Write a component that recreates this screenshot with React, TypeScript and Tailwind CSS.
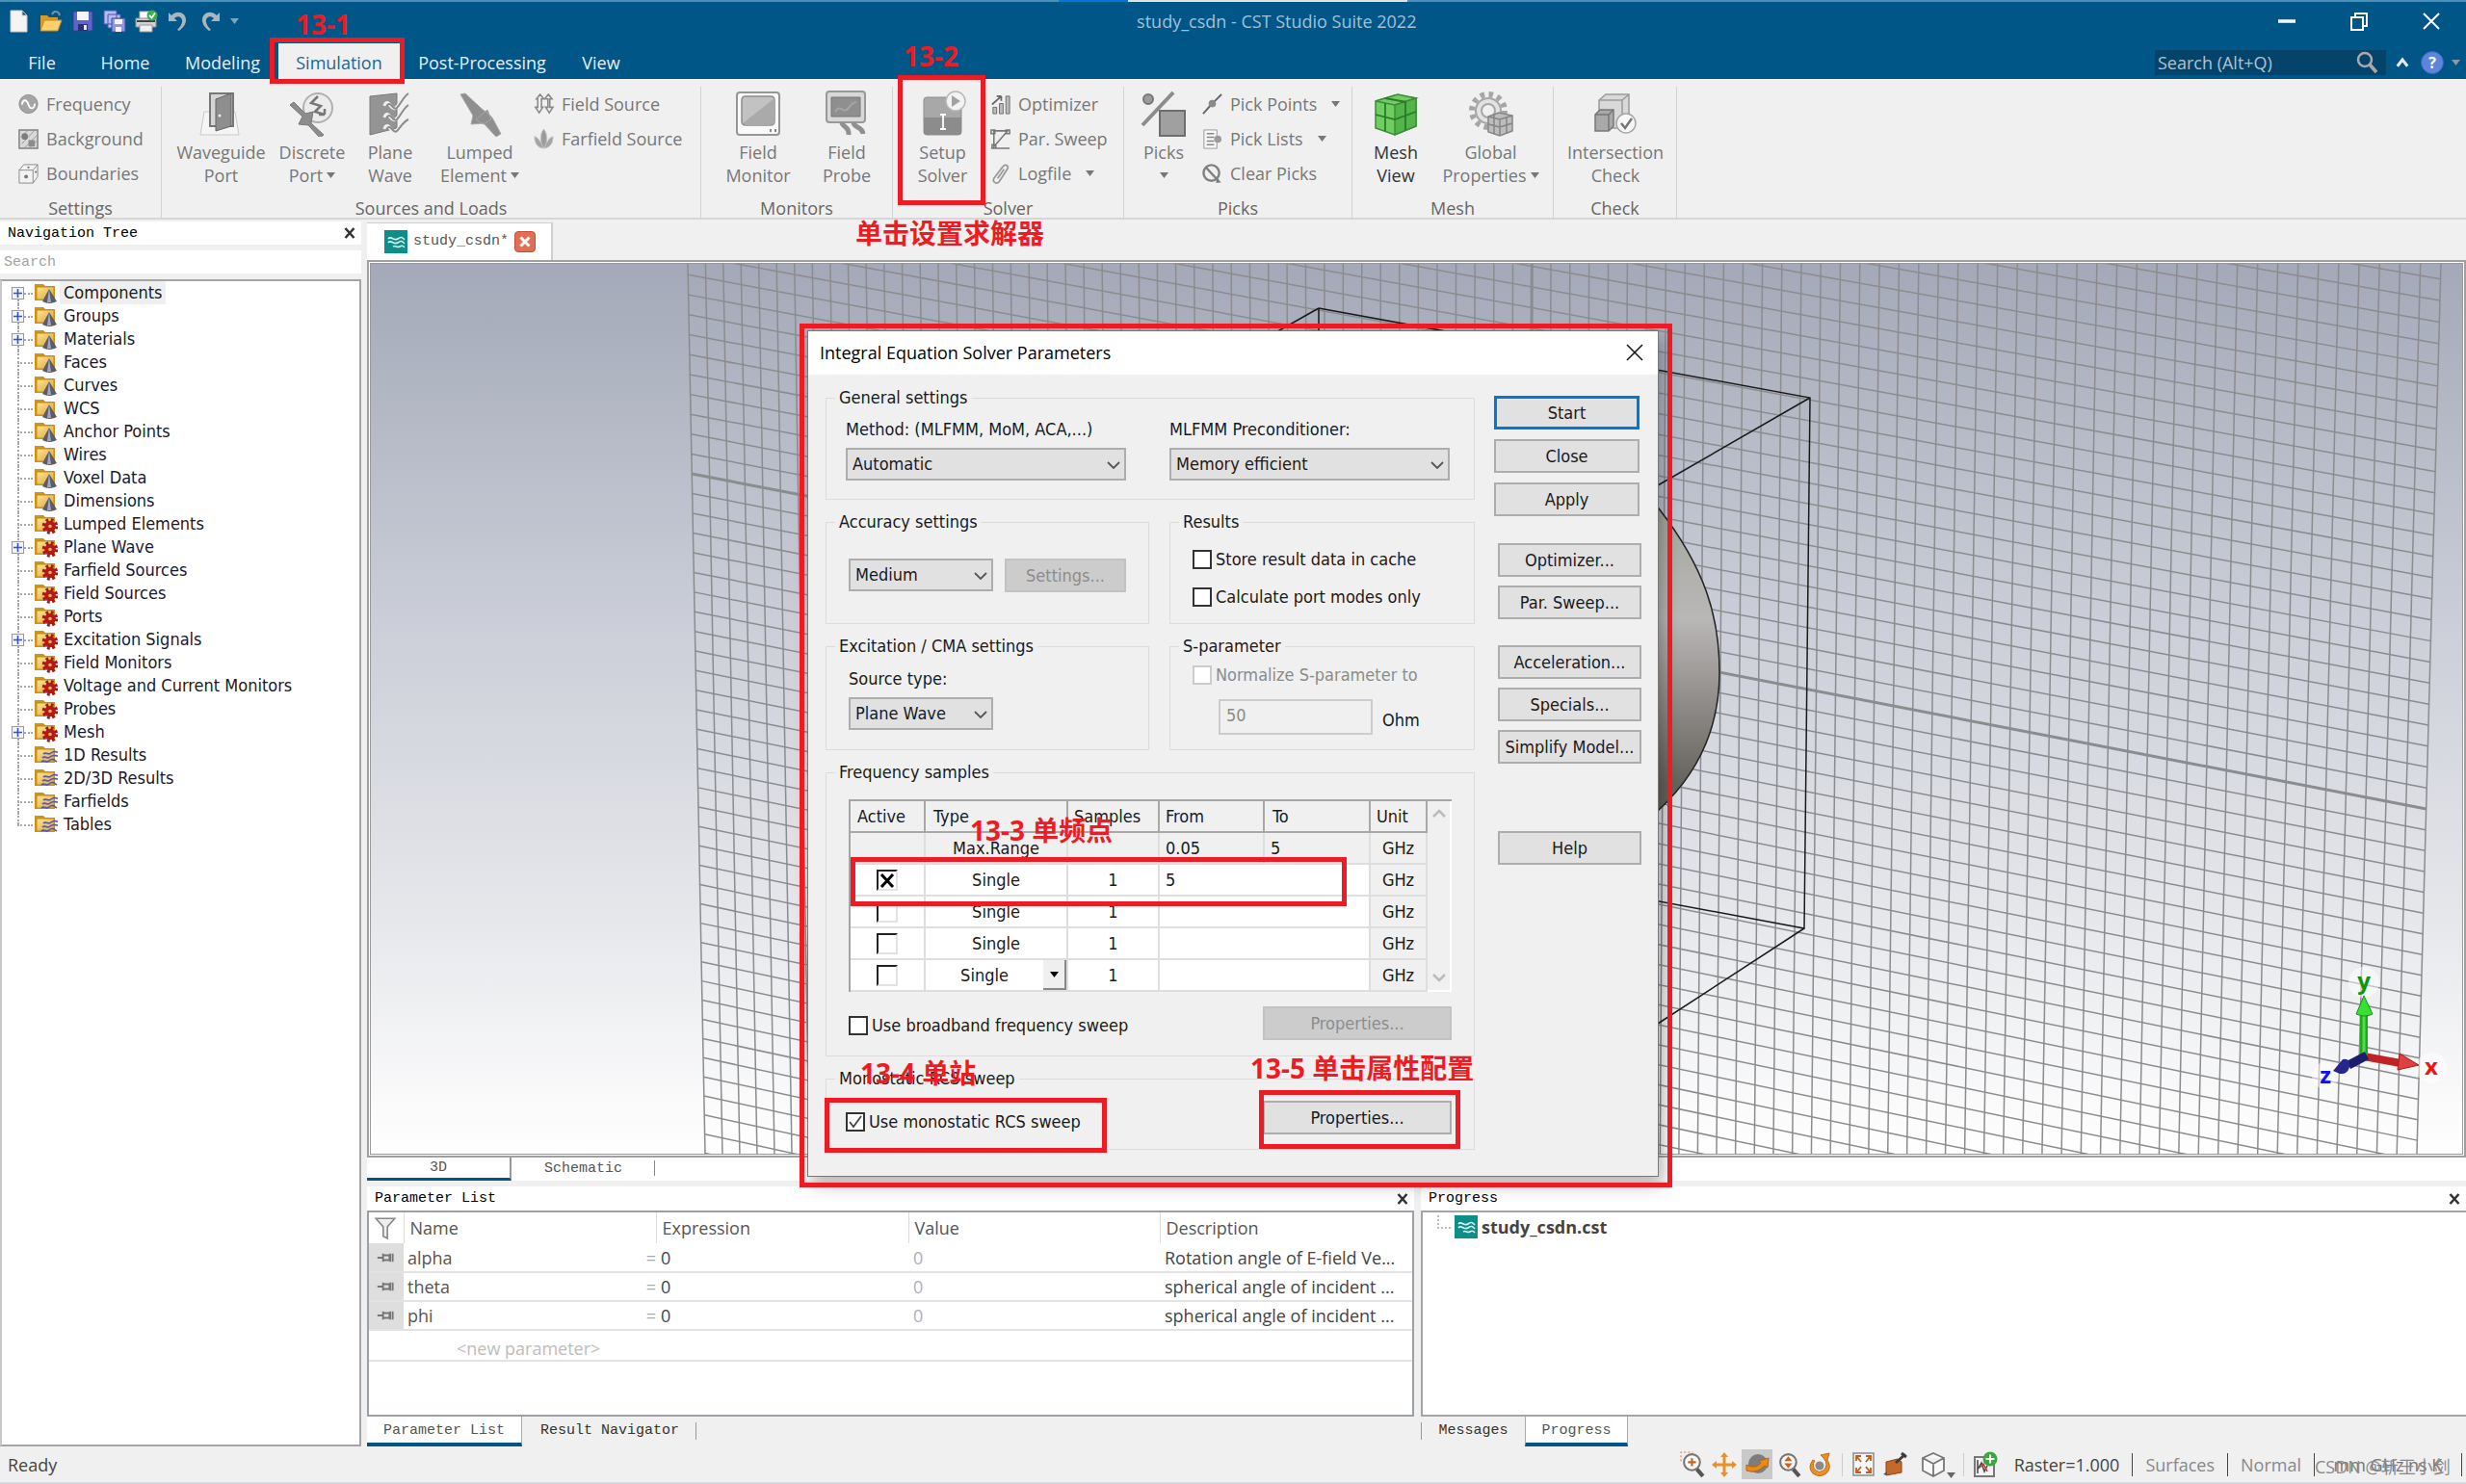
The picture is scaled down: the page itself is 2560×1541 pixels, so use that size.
import type { ReactNode } from "react"

const SEGOE = "font-['Open_Sans',sans-serif]"
const TAHOMA = "font-['DejaVu_Sans_Condensed','Noto_Sans',sans-serif]"
const MONO = "font-['Liberation_Mono',monospace]"
const NOTE = "font-['Open_Sans','Noto_Sans_CJK_SC',sans-serif]"

/* ---------- icons ---------- */

function Ico({ className = "size-6", box = 24, children }: { className?: string; box?: number; children: ReactNode }) {
  return (
    <svg className={`shrink-0 ${className}`} viewBox={`0 0 ${box} ${box}`} fill="none" aria-hidden="true">
      {children}
    </svg>
  )
}

function Caret({ className = "text-[#666]" }: { className?: string }) {
  return (
    <svg className={`inline-block h-[6px] w-[9px] ${className}`} viewBox="0 0 9 6" aria-hidden="true">
      <path d="M0 0h9L4.500 6z" fill="currentColor" />
    </svg>
  )
}

function CstIcon() {
  return (
    <Ico>
      <path d="M0 0h24v24H0z" fill="#0b8f88" />
      <path d="M4 9c3-4 6 3 10 0s5-1 7 1M4 13c3-4 6 3 10 0s5-1 7 1M9 17c3-2 4 2 7 0s4 0 5 1" stroke="#d8f3f1" strokeWidth="1.600" />
    </Ico>
  )
}

function CloseX({ label }: { label: string }) {
  return (
    <button aria-label={label} className="flex size-6 items-center justify-center">
      <Ico className="size-3" box={12}>
        <path d="M1.500 1l9 10M10.500 1l-9 10" stroke="#333" strokeWidth="2.600" />
      </Ico>
    </button>
  )
}

const quickIcons: { label: string; art: ReactNode }[] = [
  { label: "New", art: <path d="M3 1h12l5 5v17H3zM15 1v5h5" fill="#f4f4f4" stroke="#c9c9c9" /> },
  {
    label: "Open",
    art: (
      <>
        <path d="M1 6h7l2 2h9v13H1z" fill="#d99a2b" />
        <path d="M1 22l4-11h18l-4 11z" fill="#fcd06a" stroke="#c98a1d" />
        <path d="M13 5c2-4 7-4 8 1" stroke="#7f93a3" strokeWidth="2" />
      </>
    ),
  },
  {
    label: "Save",
    art: (
      <>
        <path d="M2 2h20v20H2z" fill="#5f66c9" stroke="#3a3f96" />
        <path d="M6 2h12v9H6z" fill="#f3f4ff" />
        <path d="M7 15h10v7H7z" fill="#2d3164" />
        <path d="M13 16h3v5h-3z" fill="#e5e6f5" />
      </>
    ),
  },
  {
    label: "Save All",
    art: (
      <>
        <path d="M1 1h13v14H1zM5 5h13v14H5z" fill="#b5bdf0" stroke="#4a56b5" />
        <path d="M9 9h14v14H9z" fill="#8d98e0" stroke="#3f4aa5" />
        <path d="M12 10h8v5h-8zM13 18h6v5h-6z" fill="#f3f4ff" />
      </>
    ),
  },
  {
    label: "Print",
    art: (
      <>
        <path d="M5 2h12v9H5z" fill="#fff" stroke="#b8b8b8" />
        <path d="M1 9h21v9H1z" fill="#d2d2d0" stroke="#8f8f8f" />
        <path d="M2 12h19" stroke="#444" strokeWidth="2" />
        <path d="M5 16h13v7H5z" fill="#f0f0f0" stroke="#999" />
        <circle cx="18" cy="6" r="5.500" fill="#35b04a" />
        <path d="M15 6l2.500 2.500L21 3.500" stroke="#fff" strokeWidth="1.800" />
      </>
    ),
  },
  { label: "Undo", art: <path d="M2 3v9h9L8 9c4-4 9-1 8 4-.5 3-3 6-5 8l2 1c4-3 7-7 7-11C20 3 11 0 5 6z" fill="#a9b6bf" /> },
  { label: "Redo", art: <path d="M22 3v9h-9l3-3c-4-4-9-1-8 4 .5 3 3 6 5 8l-2 1c-4-3-7-7-7-11C4 3 13 0 19 6z" fill="#a9b6bf" /> },
]

const small = {
  frequency: (
    <>
      <circle cx="12" cy="11.500" r="10" fill="#a5a5a5" stroke="#8b8b8b" />
      <path d="M5 12c1-6 5-6 7 0s6 5 7-1" stroke="#fff" strokeWidth="2" />
    </>
  ),
  background: (
    <>
      <path d="M2 2h20v20H2z" fill="#d9d9d9" stroke="#808080" strokeWidth="1.500" />
      <path d="M4 10l7-7M5 17L18 3M8 21L21 8M14 21l7-7" stroke="#9a9a9a" />
      <circle cx="8" cy="9" r="3.500" fill="#7d7d7d" />
      <path d="M12 13h7v7h-7z" fill="#8d8d8d" />
    </>
  ),
  boundaries: (
    <>
      <path d="M2 8l5-6h15v13l-5 7H2z" fill="#f2f2f2" stroke="#8a8a8a" />
      <path d="M2 8h15v14M17 8l5-6" stroke="#8a8a8a" />
      <circle cx="9.500" cy="15" r="2" fill="#777" />
      <circle cx="12" cy="5" r="1.200" fill="#777" />
      <circle cx="20" cy="10" r="1.200" fill="#777" />
    </>
  ),
  fieldSource: (
    <path
      d="M8 1l4 5H9.500v9H11l-4 6-4-6h2.500V6H4zM17 1l4 5h-2.500v9H22l-4 6-4-6h2.500V6H13z"
      fill="#f0f0f0"
      stroke="#888"
      strokeWidth="1.600"
    />
  ),
  farfield: (
    <>
      <path d="M12 22C4 21 2 15 2 9c3 1 5 3 6 6 1-3 2-3 4-3s3 0 4 3c1-3 3-5 6-6 0 6-2 12-10 13z" fill="#a4a4a4" stroke="#c4c4c4" />
      <path d="M12 22C7 14 8 6 12 1c4 5 5 13 0 21z" fill="#9c9c9c" stroke="#c8c8c8" />
    </>
  ),
  optimizer: (
    <>
      <path d="M4 15h4v7H4zM11 11h4v11h-4zM18 3h4v19h-4z" fill="#bbb" stroke="#6d6d6d" />
      <path d="M3 12L13 3M13 3H8M13 3v5" stroke="#666" strokeWidth="1.800" />
    </>
  ),
  sweep: <path d="M4 3h16L5 20V4M2 22h20M2 2h4v4H2zM18 2h4v4h-4zM3 18h4v4H3z" stroke="#777" strokeWidth="1.600" />,
  logfile: <path d="M7 14l8-10c2-3 6-1 5 2l-9 14c-3 4-8 1-6-3l9-12M9 17l7-10" stroke="#999" strokeWidth="1.800" />,
  pickPoints: (
    <>
      <path d="M2 22l9-10 3-3 8-8" stroke="#666" strokeWidth="2" />
      <circle cx="12" cy="11" r="4" fill="#8a8a8a" />
    </>
  ),
  pickLists: (
    <>
      <path d="M3 2h14v20H3z" fill="#f7f7f7" stroke="#999" />
      <path d="M6 6h8M6 10h8M6 14h8M6 18h8" stroke="#888" strokeWidth="1.500" />
      <circle cx="18" cy="12" r="4" fill="#9b9b9b" />
    </>
  ),
  clearPicks: (
    <>
      <circle cx="11" cy="11" r="8.500" stroke="#808080" strokeWidth="2.500" />
      <path d="M5 5l14 15" stroke="#808080" strokeWidth="2.500" />
      <path d="M17 18l5 3-6 1z" fill="#777" />
    </>
  ),
}

const big = {
  waveguide: (
    <>
      <path d="M6 22h8v14h18V22h6l4 24H2z" fill="#f5f5f5" stroke="#c9c9c9" />
      <path d="M12 3h24v34H12z" fill="#d5d5d5" stroke="#777" strokeWidth="2" />
      <path d="M18 9L34 3v34l-16 5z" fill="#8e8e8e" stroke="#666" />
      <circle cx="22" cy="26" r="1.500" fill="#eee" />
    </>
  ),
  discrete: (
    <>
      <circle cx="30" cy="18" r="15" fill="#ececec" stroke="#b0b0b0" strokeWidth="2" />
      <path d="M30 6l-7 7 10 3-6 6 10 3M37 25h-6M37 25v-6" stroke="#777" strokeWidth="2.500" />
      <path d="M1 15l4-3 12 12 8-2-2 12 13 12-4 3-12-13-10-1 4-8z" fill="#8d8d8d" stroke="#777" />
    </>
  ),
  planeWave: (
    <>
      <path d="M3 6l28-3v36L3 46z" fill="#949494" stroke="#7b7b7b" />
      <path d="M18 16c4-10 7 6 12 2s8-12 13-14M18 28c4-10 7 6 12 2s8-12 13-14M18 40c4-10 7 6 12 2s8-10 13-12" stroke="#efefef" strokeWidth="3.500" />
      <path d="M20 17c4-9 7 5 11 1s7-12 12-15M20 29c4-9 7 5 11 1s7-12 12-15M20 41c4-9 7 5 11 1s7-10 12-12" stroke="#8b8b8b" strokeWidth="2" />
    </>
  ),
  lumped: <path d="M4 4l5-1 16 15 11 9 2 3 8 15-5 3-13-14-13 1 2-9z M20 30l12-10 4 10-8 5z" fill="#8f8f8f" stroke="#a7a7a7" />,
  monitor: (
    <>
      <path d="M2 5a3 3 0 013-3h38a3 3 0 013 3v38a3 3 0 01-3 3H5a3 3 0 01-3-3z" fill="#fafafa" stroke="#969696" strokeWidth="2" />
      <path d="M7 10q0-4 4-4h26q4 0 4 4v22q0 4-4 4H11q-4 0-4-4z" fill="#c2c2c2" stroke="#8c8c8c" strokeWidth="1.500" />
      <path d="M8 34L41 8v24q0 4-4 4H11z" fill="#aaa" />
      <path d="M36 40h2v3h-2zM41 40h2v3h-2z" fill="#888" />
    </>
  ),
  probe: (
    <>
      <path d="M6 1h34a3 3 0 013 3v26a3 3 0 01-3 3H6a3 3 0 01-3-3V4a3 3 0 013-3z" fill="#d8d8d8" stroke="#999" strokeWidth="2" />
      <path d="M8 7h30v20H8z" fill="#8f8f8f" stroke="#777" />
      <path d="M12 22c6-9 8 3 13-3s5-6 9-7" stroke="#a5a5a5" strokeWidth="2" />
      <path d="M19 33c0 5 8 4 7 13M31 33c0 6 9 4 10 12" stroke="#909090" strokeWidth="5" />
    </>
  ),
  solver: (
    <>
      <path d="M4 10a3 3 0 013-3h33a3 3 0 013 3v33a3 3 0 01-3 3H7a3 3 0 01-3-3z" fill="#a8a8a8" stroke="#8e8e8e" />
      <path d="M4 28h39v15a3 3 0 01-3 3H7a3 3 0 01-3-3z" fill="#8c8c8c" />
      <path d="M21 25h6M24 25v15M21 40h6" stroke="#fff" strokeWidth="1.800" />
      <circle cx="37" cy="11" r="10" fill="#f3f3f3" stroke="#b9b9b9" strokeWidth="1.500" />
      <path d="M33 5l9 6-9 6z" fill="#a2a2a2" />
    </>
  ),
  picks: (
    <>
      <circle cx="8" cy="9" r="5" fill="#9b9b9b" stroke="#777" strokeWidth="2" />
      <path d="M2 36L34 2" stroke="#8c8c8c" strokeWidth="4" />
      <path d="M20 21h26v26H20z" fill="#a0a0a0" stroke="#6e6e6e" strokeWidth="2" />
    </>
  ),
  mesh: (
    <>
      <path d="M3 11l20-6 22 3v29l-22 9-20-7z" fill="#6fce62" stroke="#3a8f36" strokeWidth="1.500" />
      <path d="M3 11l20 4 22-7L26 4z" fill="#74c968" stroke="#3a8f36" strokeWidth="1.500" />
      <path d="M23 15l22-7v29l-22 9z" fill="#52b54a" stroke="#3a8f36" strokeWidth="1.500" />
      <path d="M13 13v29M3 25l20 5 22-8M34 11v30M13 8l22 4" stroke="#2a7a28" strokeWidth="1.800" />
    </>
  ),
  global: (
    <>
      <circle cx="21" cy="21" r="17" stroke="#a6a6a6" strokeWidth="6" strokeDasharray="4.500 4.400" />
      <circle cx="21" cy="21" r="13" fill="#e2e2e2" stroke="#a6a6a6" strokeWidth="2" />
      <circle cx="21" cy="21" r="7" fill="#f0f0f0" stroke="#a6a6a6" strokeWidth="2" />
      <path d="M21 27l11-4 14 3v16l-13 5-12-4z" fill="#bdbdbd" stroke="#858585" strokeWidth="1.500" />
      <path d="M21 27l12 3 13-4M33 30v17M21 35l12 3 13-4M27 25v20M40 28v17" stroke="#858585" strokeWidth="1.500" />
    </>
  ),
  intersection: (
    <>
      <path d="M7 10l7-6h24v28l-7 7H7z" fill="#d9d9d9" stroke="#9a9a9a" strokeWidth="1.500" />
      <path d="M7 10h24v28M31 10l7-6" stroke="#9a9a9a" strokeWidth="1.500" />
      <path d="M3 25l5-5h14v17l-5 5H3z" fill="#a9a9a9" stroke="#777" strokeWidth="1.500" />
      <path d="M3 25h14v17M17 25l5-5" stroke="#777" strokeWidth="1.500" />
      <circle cx="35" cy="34" r="10" fill="#f8f8f8" stroke="#a6a6a6" strokeWidth="1.500" />
      <path d="M30 34l4 5 7-10" stroke="#777" strokeWidth="2.500" />
    </>
  ),
}

/* ---------- ribbon ---------- */

function SmallBtn({ icon, text, caret }: { icon: ReactNode; text: string; caret?: boolean }) {
  return (
    <button className="flex h-9 items-center gap-[7px] whitespace-nowrap text-left">
      <Ico className="size-[23px]">{icon}</Ico>
      <span>{text}</span>
      {caret && <Caret className="ml-2 text-[#777]" />}
    </button>
  )
}

function BigBtn({
  icon,
  top,
  bottom,
  width,
  caret,
  dark,
}: {
  icon: ReactNode
  top: string
  bottom?: string
  width: string
  caret?: boolean
  dark?: boolean
}) {
  return (
    <button className={`flex flex-col items-center pt-1 ${width} ${dark ? "text-[#333]" : ""}`}>
      <Ico className="size-12" box={48}>
        {icon}
      </Ico>
      <span className="mt-1 flex flex-col items-center whitespace-nowrap leading-6">
        <span>{top}</span>
        <span className="flex h-6 items-center gap-1">
          {bottom}
          {caret && <Caret className="text-[#777]" />}
        </span>
      </span>
    </button>
  )
}

function RibbonGroup({ name, width, pad = "pl-2", children }: { name: string; width: string; pad?: string; children: ReactNode }) {
  return (
    <section className={`flex shrink-0 flex-col border-r border-[#d2d2d2] ${width}`}>
      <div className={`flex h-[117px] items-start ${pad}`}>{children}</div>
      <h2 className="text-center leading-5 text-[#666]">{name}</h2>
    </section>
  )
}

function Ribbon() {
  return (
    <div className={`flex h-[146px] shrink-0 border-b-2 border-[#d6d6d6] bg-[#f0f0f0] pt-2 text-lg text-[#777] ${SEGOE}`}>
      <RibbonGroup name="Settings" width="w-[168px]" pad="pl-[18px]">
        <div>
          <SmallBtn icon={small.frequency} text="Frequency" />
          <SmallBtn icon={small.background} text="Background" />
          <SmallBtn icon={small.boundaries} text="Boundaries" />
        </div>
      </RibbonGroup>
      <RibbonGroup name="Sources and Loads" width="w-[560px]">
        <BigBtn icon={big.waveguide} top="Waveguide" bottom="Port" width="w-[107px]" />
        <BigBtn icon={big.discrete} top="Discrete" bottom="Port" caret width="w-[82px]" />
        <BigBtn icon={big.planeWave} top="Plane" bottom="Wave" width="w-20" />
        <BigBtn icon={big.lumped} top="Lumped" bottom="Element" caret width="w-[106px]" />
        <div className="pl-[2px]">
          <SmallBtn icon={small.fieldSource} text="Field Source" />
          <SmallBtn icon={small.farfield} text="Farfield Source" />
        </div>
      </RibbonGroup>
      <RibbonGroup name="Monitors" width="w-[199px]">
        <BigBtn icon={big.monitor} top="Field" bottom="Monitor" width="w-[102px]" />
        <BigBtn icon={big.probe} top="Field" bottom="Probe" width="w-[82px]" />
      </RibbonGroup>
      <RibbonGroup name="Solver" width="w-[240px]">
        <BigBtn icon={big.solver} top="Setup" bottom="Solver" width="w-[87px]" />
        <div className="pl-[5px]">
          <SmallBtn icon={small.optimizer} text="Optimizer" />
          <SmallBtn icon={small.sweep} text="Par. Sweep" />
          <SmallBtn icon={small.logfile} text="Logfile" caret />
        </div>
      </RibbonGroup>
      <RibbonGroup name="Picks" width="w-[237px]">
        <BigBtn icon={big.picks} top="Picks" caret width="w-[66px]" />
        <div className="pl-[6px]">
          <SmallBtn icon={small.pickPoints} text="Pick Points" caret />
          <SmallBtn icon={small.pickLists} text="Pick Lists" caret />
          <SmallBtn icon={small.clearPicks} text="Clear Picks" />
        </div>
      </RibbonGroup>
      <RibbonGroup name="Mesh" width="w-[209px]" pad="pl-1">
        <BigBtn icon={big.mesh} top="Mesh" bottom="View" width="w-[82px]" dark />
        <BigBtn icon={big.global} top="Global" bottom="Properties" caret width="w-[115px]" />
      </RibbonGroup>
      <RibbonGroup name="Check" width="w-[128px]">
        <BigBtn icon={big.intersection} top="Intersection" bottom="Check" width="w-[112px]" />
      </RibbonGroup>
    </div>
  )
}

function TitleBar() {
  return (
    <header className={`relative flex h-[82px] shrink-0 flex-col border-t-2 border-[#4b90b8] bg-[#005687] ${SEGOE}`}>
      <div className="flex h-[43px] items-center pb-1 text-[#a3c1d5]">
        <div className="flex flex-11 items-center gap-[9px] pl-2">
          {quickIcons.map((q) => (
            <button key={q.label} aria-label={q.label}>
              <Ico>{q.art}</Ico>
            </button>
          ))}
          <Caret className="text-[#7fa5bd]" />
        </div>
        <h1 className="text-lg">study_csdn - CST Studio Suite 2022</h1>
        <div className="flex flex-10 items-center justify-end gap-[51px] pr-[24px]">
          <button aria-label="Minimize">
            <Ico>
              <path d="M3 12h18" stroke="#fff" strokeWidth="3.500" />
            </Ico>
          </button>
          <button aria-label="Restore">
            <Ico>
              <path d="M4 8h12v13H4zM8 8V4h12v13h-4" stroke="#fff" strokeWidth="2" />
            </Ico>
          </button>
          <button aria-label="Close">
            <Ico>
              <path d="M4 4l16 16M20 4L4 20" stroke="#fff" strokeWidth="2" />
            </Ico>
          </button>
        </div>
      </div>
      <div className="flex flex-1 items-stretch text-lg text-[#e6eef4]">
        <nav className="flex items-stretch *:pt-[2px]">
          <button className="w-[87px]">File</button>
          <button className="w-[86px]">Home</button>
          <button className="w-[116px]">Modeling</button>
          <button className="w-[126px] bg-[#f0f0f0] text-[#1d6693]">Simulation</button>
          <button className="w-[171px]">Post-Processing</button>
          <button className="w-[76px]">View</button>
        </nav>
        <div className="ml-auto flex items-center pt-[3px] pr-[6px]">
          <div className="flex h-[26px] w-[240px] items-center bg-[#04446b] pr-2">
            <input aria-label="Search commands" placeholder="Search (Alt+Q)" className="min-w-0 flex-1 pl-[3px] outline-none placeholder:text-[#adc3d2]" />
            <Ico>
              <circle cx="10" cy="9" r="7" stroke="#a9a9a9" strokeWidth="2.500" />
              <path d="M15 14l7 8" stroke="#a9a9a9" strokeWidth="3.500" />
            </Ico>
          </div>
          <button aria-label="Collapse ribbon" className="mr-[10px] ml-2">
            <Ico className="size-[18px]">
              <path d="M5 17l7-9 7 9" stroke="#e8e8e8" strokeWidth="4" />
            </Ico>
          </button>
          <button aria-label="Help" className="flex size-6 items-center justify-center rounded-full border border-[#3c62b8] bg-[#5b86dc] text-base font-bold text-white">
            ?
          </button>
          <Caret className="ml-2 text-[#8d9aa3]" />
        </div>
      </div>
      <div className="absolute top-[-2px] left-[1099px] flex h-[2px]">
        <i className="w-[72px] bg-[#0078d7]" />
        <i className="w-[290px] bg-[#e0e2e4]" />
      </div>
    </header>
  )
}

/* ---------- navigation tree ---------- */

type Kind = "cone" | "gear" | "wave"

const treeItems: { name: string; kind: Kind; open?: boolean }[] = [
  { name: "Components", kind: "cone", open: true },
  { name: "Groups", kind: "cone", open: true },
  { name: "Materials", kind: "cone", open: true },
  { name: "Faces", kind: "cone" },
  { name: "Curves", kind: "cone" },
  { name: "WCS", kind: "cone" },
  { name: "Anchor Points", kind: "cone" },
  { name: "Wires", kind: "cone" },
  { name: "Voxel Data", kind: "cone" },
  { name: "Dimensions", kind: "cone" },
  { name: "Lumped Elements", kind: "gear" },
  { name: "Plane Wave", kind: "gear", open: true },
  { name: "Farfield Sources", kind: "gear" },
  { name: "Field Sources", kind: "gear" },
  { name: "Ports", kind: "gear" },
  { name: "Excitation Signals", kind: "gear", open: true },
  { name: "Field Monitors", kind: "gear" },
  { name: "Voltage and Current Monitors", kind: "gear" },
  { name: "Probes", kind: "gear" },
  { name: "Mesh", kind: "gear", open: true },
  { name: "1D Results", kind: "wave" },
  { name: "2D/3D Results", kind: "wave" },
  { name: "Farfields", kind: "wave" },
  { name: "Tables", kind: "wave" },
]

function FolderIcon({ kind }: { kind: Kind }) {
  return (
    <Ico>
      <path d="M0 3h9l2 2h10v15H0z" fill="#cf9417" />
      <path d="M2 6h18v13H2z" fill="url(#folder)" stroke="#c98b12" />
      {kind === "cone" && (
        <>
          <path d="M15 8l8 13q-8 4-15 0z" fill="#5a5d66" />
          <path d="M15 8l2 14h-4z" fill="#a4a8bf" />
        </>
      )}
      {kind === "gear" && (
        <>
          <circle cx="16" cy="14.500" r="6.500" stroke="#a61414" strokeWidth="3.500" strokeDasharray="2.700 2.400" />
          <circle cx="16" cy="14.500" r="3.800" stroke="#b51818" strokeWidth="4" />
        </>
      )}
      {kind === "wave" && (
        <path
          d="M9 11c3-3 5 2 8-1s4-1 7-1M8 15c3-3 5 2 8-1s5-1 8-1M7 19c3-3 5 2 8-1s5-1 8 1"
          stroke="#5656ab"
          strokeWidth="1.600"
        />
      )}
    </Ico>
  )
}

function NavigationTree() {
  return (
    <aside className="flex w-[375px] shrink-0 flex-col pt-[2px]">
      <div className={`flex h-6 items-center justify-between bg-white pl-2 text-[15px] text-black ${MONO}`}>
        <h2 className="pt-[2px]">Navigation Tree</h2>
        <CloseX label="Close navigation tree" />
      </div>
      <input
        aria-label="Search tree"
        placeholder="Search"
        className={`my-[6px] h-6 bg-white pl-1 text-[15px] outline-none placeholder:text-[#a3a3a3] ${MONO}`}
      />
      <svg className="absolute size-0" aria-hidden="true">
        <linearGradient id="folder" x1="0" y1="0" x2="1" y2="1">
          <stop offset="0" stopColor="#fbe49c" />
          <stop offset="1" stopColor="#dda631" />
        </linearGradient>
      </svg>
      <ul className={`flex-1 border-2 border-[#a5a5a5] border-l-[#c8c8c8] bg-white text-lg leading-6 text-[#1a1a2b] ${TAHOMA}`}>
        {treeItems.map((item, i) => (
          <li key={item.name} className="relative flex h-6 items-center pl-[10px]">
            <span className={`absolute left-4 w-px border-l-2 border-dotted border-[#a8a8a8] ${i === 0 ? "top-3 bottom-0" : i === treeItems.length - 1 ? "top-0 bottom-3" : "inset-y-0"}`} />
            <span className="absolute top-3 left-4 w-4 border-t-2 border-dotted border-[#a8a8a8]" />
            <span className="relative flex w-6">
              {item.open && (
                <button aria-label={`Expand ${item.name}`} className="flex size-[13px] items-center justify-center border border-[#999] bg-[#f4f4f4]">
                  <Ico className="size-[9px]" box={9}>
                    <path d="M0 4.500h9M4.500 0v9" stroke="#3a56a8" strokeWidth="1.600" />
                  </Ico>
                </button>
              )}
            </span>
            <FolderIcon kind={item.kind} />
            <span className={`ml-[2px] px-1 ${i === 0 ? "bg-[#efefef]" : ""}`}>{item.name}</span>
          </li>
        ))}
      </ul>
    </aside>
  )
}

/* ---------- 3D view ---------- */

const VIEW = { left: 384, top: 274, width: 2173, height: 924 }

// position of grid column i (0..92) between two edges, with perspective
function column(i: number, x0: number, x1: number) {
  return x0 + (((x1 - x0) * 0.9285) / 92) * (i / (1 - 0.000777 * i))
}

function row(j: number, y0: number, step: number) {
  return y0 + (step * j) / (1 + 0.00056 * j)
}

// the left and right edges of the working plane lean inwards
function edge(y: number, topX: number, bottomX: number) {
  return topX + ((y - 274) * (bottomX - topX)) / 924
}

function Scene() {
  const columns = Array.from({ length: 93 }, (_, i) => i)
  const rows = Array.from({ length: 68 }, (_, i) => i - 30)
  return (
    <svg
      className="size-full"
      viewBox={`${VIEW.left} ${VIEW.top} ${VIEW.width} ${VIEW.height}`}
      preserveAspectRatio="xMidYMid slice"
      fill="none"
      role="img"
      aria-label="3D model view"
    >
      <defs>
        <linearGradient id="sky" x1="0" y1="0" x2="0" y2="1">
          <stop offset="0" stopColor="#a3a9b8" />
          <stop offset="0.400" stopColor="#cbced8" />
          <stop offset="0.720" stopColor="#e5e6ea" />
          <stop offset="1" stopColor="#fff" />
        </linearGradient>
        <linearGradient id="ball" x1="0" y1="0" x2="0" y2="1">
          <stop offset="0.200" stopColor="#a3a59b" />
          <stop offset="0.480" stopColor="#b9b7b7" />
          <stop offset="0.620" stopColor="#9b9795" />
          <stop offset="0.850" stopColor="#66625c" />
        </linearGradient>
      </defs>
      <rect x={VIEW.left} y={VIEW.top} width={VIEW.width} height={VIEW.height} fill="url(#sky)" />
      <g stroke="#8b8c8e" strokeWidth="1.500">
        {columns.map((i) => (
          <line key={i} x1={column(i, 714, 2534)} y1={274} x2={column(i, 732, 2509)} y2={1198} strokeWidth={i === 46 ? 3 : 1.5} />
        ))}
        {rows.map((j) => {
          const y1 = row(j, 492, 20.55)
          const y2 = row(j, 840, 21.7)
          return <line key={j} x1={edge(y1, 714, 732)} y1={y1} x2={edge(y2, 2534, 2509)} y2={y2} strokeWidth={j === 0 ? 3 : 1.5} />
        })}
      </g>
      <path d="M1500 420C1640 440 1690 490 1722 528C1770 590 1785 640 1785 698C1785 770 1750 815 1722 841C1680 880 1600 890 1500 880z" fill="url(#ball)" stroke="#222" strokeWidth="1.500" />
      <path
        d="M1369 320L1879 413L1873 964L1369 870M1369 320V870M1369 320L1050 500M1879 413L1721 504M1873 964L1721 1063"
        stroke="#1a1a1a"
        strokeWidth="1.500"
      />
      <circle cx="2454" cy="1020" r="16" fill="#fff" fillOpacity="0.500" />
      <circle cx="2524" cy="1109" r="16" fill="#fff" fillOpacity="0.500" />
      <circle cx="2414" cy="1117" r="14" fill="#fff" fillOpacity="0.500" />
      <path d="M2454 1097L2492 1104" stroke="#c02323" strokeWidth="8" />
      <path d="M2491 1094L2511 1106L2489 1111z" fill="#e04040" stroke="#a81d1d" />
      <path d="M2454 1096V1050" stroke="#22a81f" strokeWidth="8" />
      <path d="M2454 1096V1050" stroke="#4fdd4a" strokeWidth="3" />
      <path d="M2446 1053L2454 1034L2463 1053q-8 4-17 0z" fill="#37e033" stroke="#1c8f1a" />
      <path d="M2457 1096L2438 1106" stroke="#1c1c6e" strokeWidth="9" />
      <path d="M2432 1100q8-2 7 8q-2 8-10 7l-7-3z" fill="#26268f" />
      <g fontFamily="Open Sans, sans-serif" fontWeight="700" fontSize="24" textAnchor="middle">
        <text x="2454" y="1027" fill="#0c960c">y</text>
        <text x="2524" y="1116" fill="#f01414">x</text>
        <text x="2414" y="1125" fill="#1010ee">z</text>
      </g>
    </svg>
  )
}

function Workspace() {
  return (
    <>
      <div className="flex h-[42px] shrink-0 items-end">
        <div className={`flex h-[39px] w-[193px] items-center gap-[6px] border-t border-r-2 border-[#cfcfcf] bg-white pl-[18px] text-[15px] text-[#555] ${MONO}`}>
          <CstIcon />
          <span>study_csdn*</span>
          <button aria-label="Close project" className="flex size-[22px] items-center justify-center rounded-sm border border-[#cc4a35] bg-[#de7057]">
            <Ico className="size-3" box={12}>
              <path d="M1.500 1.500l9 9M10.500 1.500l-9 9" stroke="#fff" strokeWidth="3" />
            </Ico>
          </button>
        </div>
      </div>
      <div className="min-h-0 flex-1 border-2 border-[#a0a0a0] bg-white p-px">
        <div className="size-full border border-[#999]">
          <Scene />
        </div>
      </div>
      <div className={`flex h-6 shrink-0 bg-white text-[15px] text-[#555] ${MONO}`}>
        <button className="w-[150px] border-r-2 border-b-3 border-r-[#999] border-b-[#005687]">3D</button>
        <button className="ml-[34px]">Schematic</button>
        <span className="mt-[3px] ml-[33px] h-4 w-px bg-[#888]" />
      </div>
    </>
  )
}

/* ---------- bottom panels ---------- */

const parameters = [
  { name: "alpha", expression: "0", value: "0", description: "Rotation angle of E-field Ve..." },
  { name: "theta", expression: "0", value: "0", description: "spherical angle of incident ..." },
  { name: "phi", expression: "0", value: "0", description: "spherical angle of incident ..." },
]

function PanelTitle({ text }: { text: string }) {
  return (
    <div className={`flex h-[25px] shrink-0 items-center justify-between bg-white pl-2 text-[15px] text-black ${MONO}`}>
      <h2 className="pt-[2px]">{text}</h2>
      <CloseX label={`Close ${text}`} />
    </div>
  )
}

function ParameterPanel() {
  const head = "pl-[6px] font-normal"
  return (
    <section className="flex w-[1087px] shrink-0 flex-col">
      <PanelTitle text="Parameter List" />
      <div className="h-[214px] border-2 border-[#9b9fa6] bg-white">
        <table className={`w-full table-fixed text-lg leading-6 text-[#555] ${SEGOE}`}>
          <colgroup>
            <col className="w-[36px]" />
            <col className="w-[262px]" />
            <col className="w-[262px]" />
            <col className="w-[261px]" />
            <col />
          </colgroup>
          <thead>
            <tr className="h-8 text-left">
              <th className="border-r border-[#dcdcdc] pl-1">
                <Ico className="size-[26px]">
                  <path d="M3 3h18l-7 8v11l-4-2v-9z" fill="#eee" stroke="#888" strokeWidth="1.500" />
                </Ico>
              </th>
              <th className={`border-r border-[#dcdcdc] ${head}`}>Name</th>
              <th className={`border-r border-[#dcdcdc] ${head}`}>Expression</th>
              <th className={`border-r border-[#dcdcdc] ${head}`}>Value</th>
              <th className={head}>Description</th>
            </tr>
          </thead>
          <tbody>
            {parameters.map((p) => (
              <tr key={p.name} className="h-[30px] border-b-2 border-[#e3e3e3]">
                <td className="bg-[#dedede]">
                  <Ico className="mx-auto size-5">
                    <path d="M1 12h7M8 7v10M8 9h8v6H8M17 7v10M20 7v10" stroke="#777" strokeWidth="2.200" />
                  </Ico>
                </td>
                <td className="px-1">
                  <span className="flex justify-between">
                    {p.name}
                    <span className="-mr-1 text-[#aaa]">=</span>
                  </span>
                </td>
                <td className="pl-[5px] text-[#444]">{p.expression}</td>
                <td className="pl-[5px] text-[#b0b0b0]">{p.value}</td>
                <td className="overflow-hidden pl-[5px] whitespace-nowrap text-[#444]">{p.description}</td>
              </tr>
            ))}
            <tr className="h-[31px] border-b-2 border-[#e3e3e3] text-[#bdbdbd]">
              <td colSpan={5} className="pt-[6px] pl-[91px]">
                &lt;new parameter&gt;
              </td>
            </tr>
          </tbody>
        </table>
      </div>
      <div className={`flex h-[31px] text-[15px] text-[#333] ${MONO}`}>
        <button className="w-[161px] border-r border-b-4 border-r-[#aaa] border-b-[#005687] bg-white pt-1 text-[#555]">Parameter List</button>
        <button className="ml-[19px]">Result Navigator</button>
        <span className="mt-[6px] ml-[17px] h-[18px] w-px bg-[#999]" />
      </div>
    </section>
  )
}

function ProgressPanel() {
  return (
    <section className="flex min-w-0 flex-1 flex-col">
      <PanelTitle text="Progress" />
      <div className="h-[214px] border-2 border-r-0 border-[#a5a5a5] bg-white">
        <div className={`flex items-start gap-1 pt-[3px] pl-[15px] text-lg leading-6 font-bold text-[#444] ${SEGOE}`}>
          <span className="h-[14px] w-[14px] border-b-2 border-l-2 border-dotted border-[#bbb]" />
          <CstIcon />
          <span>study_csdn.cst</span>
        </div>
      </div>
      <div className={`flex h-[31px] text-[15px] text-[#333] ${MONO}`}>
        <span className="mt-[6px] h-[18px] w-px bg-[#999]" />
        <button className="w-[107px]">Messages</button>
        <button className="w-[107px] border-x border-b-4 border-x-[#aaa] border-b-[#005687] bg-white pt-1 text-[#555]">Progress</button>
      </div>
    </section>
  )
}

/* ---------- status bar ---------- */

const lens = (
  <>
    <circle cx="12" cy="11" r="8" fill="#f8f8f8" stroke="#777" strokeWidth="2" />
    <path d="M17 18l6 7" stroke="#555" strokeWidth="4" />
  </>
)

function StatusBar() {
  const divider = <span className="h-6 w-px bg-[#444]" />
  return (
    <footer className={`flex h-[39px] shrink-0 items-center border-b-2 border-[#cfdcea] pl-2 text-lg text-[#444] ${SEGOE}`}>
      <span>Ready</span>
      <div className="ml-auto flex items-center">
        <button aria-label="Zoom window" className="mr-1 size-7">
          <Ico className="size-7" box={27}>
            <path d="M1 10V1h12" stroke="#d9813a" strokeDasharray="2 2" />
            <g>{lens}</g>
            <path d="M8 11h8M12 7v8" stroke="#c8641e" strokeWidth="2" />
          </Ico>
        </button>
        <button aria-label="Pan" className="mr-1 size-7">
          <Ico className="size-7" box={28}>
            <path d="M14 1l4 5h-2.500v6.500H22V10l5 4-5 4v-2.500h-6.500V22H18l-4 5-4-5h2.500v-6.500H6V18l-5-4 5-4v2.500h6.500V6H10z" fill="#e8912a" />
          </Ico>
        </button>
        <button aria-label="Rotate" className="mr-1 flex h-[31px] w-8 items-center justify-center bg-[#c9c9c9]">
          <Ico className="size-7" box={28}>
            <circle cx="15" cy="13" r="10" fill="#7d7d7d" />
            <path d="M3 14q9 5 15-2l-2-2 10-3-1 10-3-2q-9 9-19 5z" fill="#e88a1c" stroke="#b3640c" />
          </Ico>
        </button>
        <button aria-label="Zoom" className="mr-1 size-7">
          <Ico className="size-7" box={27}>
            {lens}
            <path d="M12 5l4 5H8zM12 17l4-5H8z" fill="#c8641e" />
          </Ico>
        </button>
        <button aria-label="Rotate in plane" className="size-7">
          <Ico className="size-7" box={28}>
            <circle cx="13" cy="15" r="4.500" fill="#8b8b8b" />
            <path d="M6 9q-6 8 0 14 7 5 14 0 6-6 1-14l2-7-9 2 3 3q6 7 0 13-4 3-8 0-5-5-1-10z" fill="#e8912a" stroke="#bf6c10" />
          </Ico>
        </button>
        <span className="mx-2 h-6 w-px bg-[#ccc]" />
        <button aria-label="Reset view" className="mr-1 size-7">
          <Ico className="size-7" box={28}>
            <path d="M3 2h21v23H3z" fill="#f8f8f8" stroke="#8a8a8a" strokeWidth="1.500" />
            <path d="M6 10V5h5M21 10V5h-5M6 17v5h5M21 17v5h-5M7 6l4 5M20 6l-4 5M7 21l4-5M20 21l-4-5" stroke="#c65a1c" strokeWidth="1.800" />
          </Ico>
        </button>
        <button aria-label="Working plane" className="mr-3 size-7">
          <Ico className="size-7" box={28}>
            <path d="M5 11l12-3 4 3v11L5 25z" fill="#c4692c" stroke="#8d4312" />
            <path d="M15 12l10-9M21 2l5 4" stroke="#3c3c3c" strokeWidth="3" />
            <path d="M2 24l4-3v4z" fill="#555" />
          </Ico>
        </button>
        <button aria-label="View direction" className="flex h-7 items-end">
          <Ico className="size-7" box={28}>
            <path d="M14 2l11 5v13l-11 6-11-6V7zM3 7l11 6 11-6M14 13v13" fill="#f8f8f8" stroke="#777" strokeWidth="1.800" />
          </Ico>
          <Caret />
        </button>
        <span className="mx-2 h-6 w-px bg-[#ccc]" />
        <button aria-label="Add report" className="mr-4 size-7">
          <Ico className="size-7" box={28}>
            <path d="M3 6h20v20H3z" fill="#f2f2f2" stroke="#777" strokeWidth="2" />
            <path d="M6 9v14M6 19l4-7 3 9 3-6" stroke="#444" strokeWidth="1.500" />
            <path d="M8 17l4-4 4 8" stroke="#c33" strokeWidth="1.500" />
            <circle cx="19" cy="8" r="7.500" fill="#39a83e" />
            <path d="M19 3.500v9M14.500 8h9" stroke="#fff" strokeWidth="2" />
          </Ico>
        </button>
        <span className="pr-[13px]">Raster=1.000</span>
        {divider}
        <span className="px-[13px] text-[#888]">Surfaces</span>
        {divider}
        <span className="px-[13px] text-[#888]">Normal</span>
        {divider}
        <span className="relative flex w-[152px] justify-center text-[#777]">
          mm GHz ns K
          <span className={`absolute top-[2px] left-0 whitespace-nowrap text-[#8a8a8a] ${NOTE}`}>CSDN @斩王小剑</span>
        </span>
        {divider}
        <span className="w-1" />
      </div>
    </footer>
  )
}

/* ---------- solver dialog ---------- */

function Group({ title, className = "", children }: { title: string; className?: string; children: ReactNode }) {
  return (
    <fieldset className={`border border-[#dcdcdc] ${className}`}>
      <legend className="ml-[9px] h-[22px] px-1 leading-[22px]">{title}</legend>
      {children}
    </fieldset>
  )
}

function Select({ id, value, width, label }: { id: string; value: string; width: string; label?: string }) {
  return (
    <span className={`relative block ${width}`}>
      <select id={id} aria-label={label} className="block h-[34px] w-full appearance-none border-2 border-[#adadad] bg-[#e1e1e1] pl-[5px]">
        <option>{value}</option>
      </select>
      <svg className="pointer-events-none absolute top-[14px] right-[6px] h-2 w-[14px]" viewBox="0 0 14 8" fill="none" aria-hidden="true">
        <path d="M1 1l6 6 6-6" stroke="#555" strokeWidth="1.800" />
      </svg>
    </span>
  )
}

function Check({ label, checked, disabled }: { label: string; checked?: boolean; disabled?: boolean }) {
  return (
    <label className={`flex items-center gap-1 whitespace-nowrap ${disabled ? "text-[#8b8b8b]" : ""}`}>
      <span className="relative size-5">
        <input
          type="checkbox"
          defaultChecked={checked}
          disabled={disabled}
          className="block size-5 appearance-none border-2 border-[#333] bg-white disabled:border-[#ccc]"
        />
        {checked && (
          <svg className="pointer-events-none absolute inset-0 size-5" viewBox="0 0 20 20" fill="none" aria-hidden="true">
            <path d="M4 10l4 5 8-11" stroke="#444" strokeWidth="1.800" />
          </svg>
        )}
      </span>
      {label}
    </label>
  )
}

function Btn({ children, width = "w-[149px]", disabled, primary }: { children: ReactNode; width?: string; disabled?: boolean; primary?: boolean }) {
  const border = primary ? "border-3 border-[#0078d7]" : "border-2 border-[#adadad]"
  return (
    <button
      disabled={disabled}
      className={`h-[35px] bg-[#e1e1e1] whitespace-nowrap disabled:border-[#c2c2c2] disabled:bg-[#ccc] disabled:text-[#8d8d8d] ${border} ${width}`}
    >
      {children}
    </button>
  )
}

function GridCheck({ checked, label }: { checked?: boolean; label: string }) {
  return (
    <span className="relative mx-auto block size-[22px]">
      <input
        type="checkbox"
        aria-label={label}
        defaultChecked={checked}
        className="block size-[22px] appearance-none border-2 border-t-[#222] border-r-[#e3e3e3] border-b-[#e3e3e3] border-l-[#222] bg-white"
      />
      {checked && (
        <svg className="pointer-events-none absolute inset-0 size-[22px]" viewBox="0 0 22 22" aria-hidden="true">
          <path d="M5 5l12 13M17 5L5 18" stroke="#000" strokeWidth="3" />
        </svg>
      )}
    </span>
  )
}

function FrequencyTable() {
  const open = "border-b-2 border-[#dedede]"
  const cell = `border-r-2 ${open}`
  const head = "border-r-2 border-b-2 border-[#a8a8a8] font-normal text-left"
  return (
    <div className="flex w-[626px] border-t-2 border-l-2 border-[#a5a5a5]">
      <table className="w-[599px] table-fixed">
        <colgroup>
          <col className="w-[77px]" />
          <col className="w-[148px]" />
          <col className="w-[95px]" />
          <col className="w-[109px]" />
          <col className="w-[110px]" />
          <col />
        </colgroup>
        <thead>
          <tr className="h-8 bg-[#f0f0f0]">
            <th className={`${head} pl-[7px]`}>Active</th>
            <th className={`${head} pl-2`}>Type</th>
            <th className={`${head} pl-[6px]`}>Samples</th>
            <th className={`${head} pl-[6px]`}>From</th>
            <th className={`${head} pl-2`}>To</th>
            <th className={`${head} pl-[6px]`}>Unit</th>
          </tr>
        </thead>
        <tbody>
          <tr className="h-[33px] bg-[#f0f0f0]">
            <td className={cell} />
            <td className={`${cell} text-center`}>Max.Range</td>
            <td className={cell} />
            <td className={`${cell} pl-[6px]`}>0.05</td>
            <td className={`${cell} pl-[6px]`}>5</td>
            <td className={`${cell} text-center`}>GHz</td>
          </tr>
          {[0, 1, 2, 3].map((n) => (
            <tr key={n} className="h-[33px] bg-white">
              <td className={cell}>
                <GridCheck checked={n === 0} label={`Sample ${n + 1} active`} />
              </td>
              <td className={`${cell} text-center`}>
                {n < 3 ? (
                  "Single"
                ) : (
                  <span className="flex h-[31px] items-center">
                    <span className="flex-1">Single</span>
                    <button aria-label="Choose type" className="flex h-full w-6 items-center justify-center border-r-2 border-b-2 border-[#888] bg-[#efefef]">
                      <Caret className="text-black" />
                    </button>
                  </span>
                )}
              </td>
              <td className={`${cell} text-center`}>1</td>
              <td className={`${open} pl-[6px]`}>{n === 0 ? "5" : ""}</td>
              <td className={cell} />
              <td className={`${cell} bg-[#f0f0f0] text-center`}>GHz</td>
            </tr>
          ))}
        </tbody>
      </table>
      <div className="flex w-[25px] flex-col items-center justify-between border-r-2 border-b-2 border-white py-2">
        {["M1 8l6-6 6 6", "M1 2l6 6 6-6"].map((d) => (
          <svg key={d} className="h-[10px] w-[14px]" viewBox="0 0 14 10" fill="none" aria-hidden="true">
            <path d={d} stroke="#bbb" strokeWidth="2.500" />
          </svg>
        ))}
      </div>
    </div>
  )
}

function SolverDialog() {
  return (
    <div
      role="dialog"
      aria-label="Integral Equation Solver Parameters"
      className={`absolute top-[343px] left-[838px] w-[884px] border border-[#777] bg-[#f0f0f0] text-lg leading-[22px] text-[#1a1a1a] shadow-[4px_8px_16px_rgba(0,0,0,0.3)] ${TAHOMA}`}
    >
      <div className={`flex h-[45px] items-center justify-between bg-white pr-[14px] pb-[2px] pl-3 text-black ${SEGOE}`}>
        <h2>Integral Equation Solver Parameters</h2>
        <button aria-label="Close dialog">
          <Ico className="size-5" box={20}>
            <path d="M2 2l16 16M18 2L2 18" stroke="#111" strokeWidth="1.500" />
          </Ico>
        </button>
      </div>
      <div className="flex pt-[13px] pb-[27px] pl-[18px]">
        <div className="flex w-[674px] flex-col gap-3">
          <Group title="General settings" className="h-[117px]">
            <div className="flex gap-[45px] pt-[11px] pl-5">
              <div>
                <label htmlFor="method" className="mb-2 block">
                  Method: (MLFMM, MoM, ACA,...)
                </label>
                <Select id="method" value="Automatic" width="w-[291px]" />
              </div>
              <div>
                <label htmlFor="precond" className="mb-2 block">
                  MLFMM Preconditioner:
                </label>
                <Select id="precond" value="Memory efficient" width="w-[291px]" />
              </div>
            </div>
          </Group>
          <div className="grid grid-cols-[336px_317px] gap-x-[21px] gap-y-3">
            <Group title="Accuracy settings" className="h-[117px]">
              <div className="flex gap-3 pt-[27px] pl-[23px]">
                <Select id="accuracy" label="Accuracy" value="Medium" width="w-[150px]" />
                <Btn width="w-[126px]" disabled>
                  Settings...
                </Btn>
              </div>
            </Group>
            <Group title="Results" className="h-[117px]">
              <div className="flex flex-col gap-[17px] pt-[17px] pl-[23px]">
                <Check label="Store result data in cache" />
                <Check label="Calculate port modes only" />
              </div>
            </Group>
            <Group title="Excitation / CMA settings" className="h-[119px]">
              <div className="pt-3 pl-[23px]">
                <label htmlFor="source" className="mb-2 block">
                  Source type:
                </label>
                <Select id="source" value="Plane Wave" width="w-[150px]" />
              </div>
            </Group>
            <Group title="S-parameter" className="h-[119px]">
              <div className="flex flex-col gap-[14px] pt-2 pl-[23px]">
                <Check label="Normalize S-parameter to" disabled />
                <label className="flex items-center gap-[10px] pl-[27px]">
                  <input disabled defaultValue="50" className="h-[37px] w-[160px] border-2 border-[#ccc] pb-1 pl-[6px] text-[#8b8b8b]" />
                  <span className="pt-[6px]">Ohm</span>
                </label>
              </div>
            </Group>
          </div>
          <Group title="Frequency samples" className="h-[306px]">
            <div className="flex flex-col pt-[17px] pl-[23px]">
              <FrequencyTable />
              <div className="flex w-[626px] items-end justify-between pt-[15px]">
                <div className="pb-1">
                  <Check label="Use broadband frequency sweep" />
                </div>
                <Btn width="w-[196px]" disabled>
                  Properties...
                </Btn>
              </div>
            </div>
          </Group>
          <Group title="Monostatic RCS sweep" className="h-[85px]">
            <div className="flex w-[649px] items-end justify-between pt-3 pl-5">
              <div className="pb-[2px]">
                <Check label="Use monostatic RCS sweep" checked />
              </div>
              <Btn width="w-[196px]">Properties...</Btn>
            </div>
          </Group>
        </div>
        <div className="ml-5 flex flex-col pt-[9px]">
          <div className="flex flex-col gap-[10px]">
            <Btn width="w-[151px]" primary>
              Start
            </Btn>
            <Btn width="w-[151px]">Close</Btn>
            <Btn width="w-[151px]">Apply</Btn>
          </div>
          <div className="ml-1 flex flex-col gap-[9px] pt-[28px]">
            <Btn>Optimizer...</Btn>
            <Btn>Par. Sweep...</Btn>
          </div>
          <div className="ml-1 flex flex-col gap-[9px] pt-[27px]">
            <Btn>Acceleration...</Btn>
            <Btn>Specials...</Btn>
            <Btn>Simplify Model...</Btn>
          </div>
          <div className="ml-1 pt-[70px]">
            <Btn>Help</Btn>
          </div>
        </div>
      </div>
    </div>
  )
}

/* ---------- tutorial marks ---------- */

function Annotations() {
  const frame = "absolute border-5 border-[#ed1c24]"
  const note = "absolute whitespace-nowrap"
  return (
    <div className={`pointer-events-none text-[28px] leading-8 font-bold text-[#ed1c24] ${NOTE}`}>
      <div className={`${frame} top-[39px] left-[280px] h-[48px] w-[140px]`} />
      <div className={`${frame} top-[78px] left-[932px] h-[135px] w-[91px]`} />
      <div className={`${frame} top-[336px] left-[830px] h-[897px] w-[906px]`} />
      <div className={`${frame} top-[890px] left-[883px] h-[51px] w-[515px]`} />
      <div className={`${frame} top-[1140px] left-[856px] h-[57px] w-[293px]`} />
      <div className={`${frame} top-[1132px] left-[1307px] h-[61px] w-[209px]`} />
      <p className={`${note} top-[9px] left-[307px]`}>13-1</p>
      <p className={`${note} top-[42px] left-[938px]`}>13-2</p>
      <p className={`${note} top-[226px] left-[888px]`}>单击设置求解器</p>
      <p className={`${note} top-[846px] left-[1007px]`}>13-3 单频点</p>
      <p className={`${note} top-[1098px] left-[893px]`}>13-4 单站</p>
      <p className={`${note} top-[1093px] left-[1298px]`}>13-5 单击属性配置</p>
    </div>
  )
}

export default function App() {
  return (
    <div className="relative flex h-screen flex-col overflow-hidden bg-[#f0f0f0]">
      <TitleBar />
      <Ribbon />
      <main className="flex min-h-0 flex-1">
        <NavigationTree />
        <div className="ml-[6px] flex min-w-0 flex-1 flex-col">
          <Workspace />
          <div className="mt-[6px] flex shrink-0 gap-[7px]">
            <ParameterPanel />
            <ProgressPanel />
          </div>
        </div>
      </main>
      <StatusBar />
      <SolverDialog />
      <Annotations />
    </div>
  )
}
